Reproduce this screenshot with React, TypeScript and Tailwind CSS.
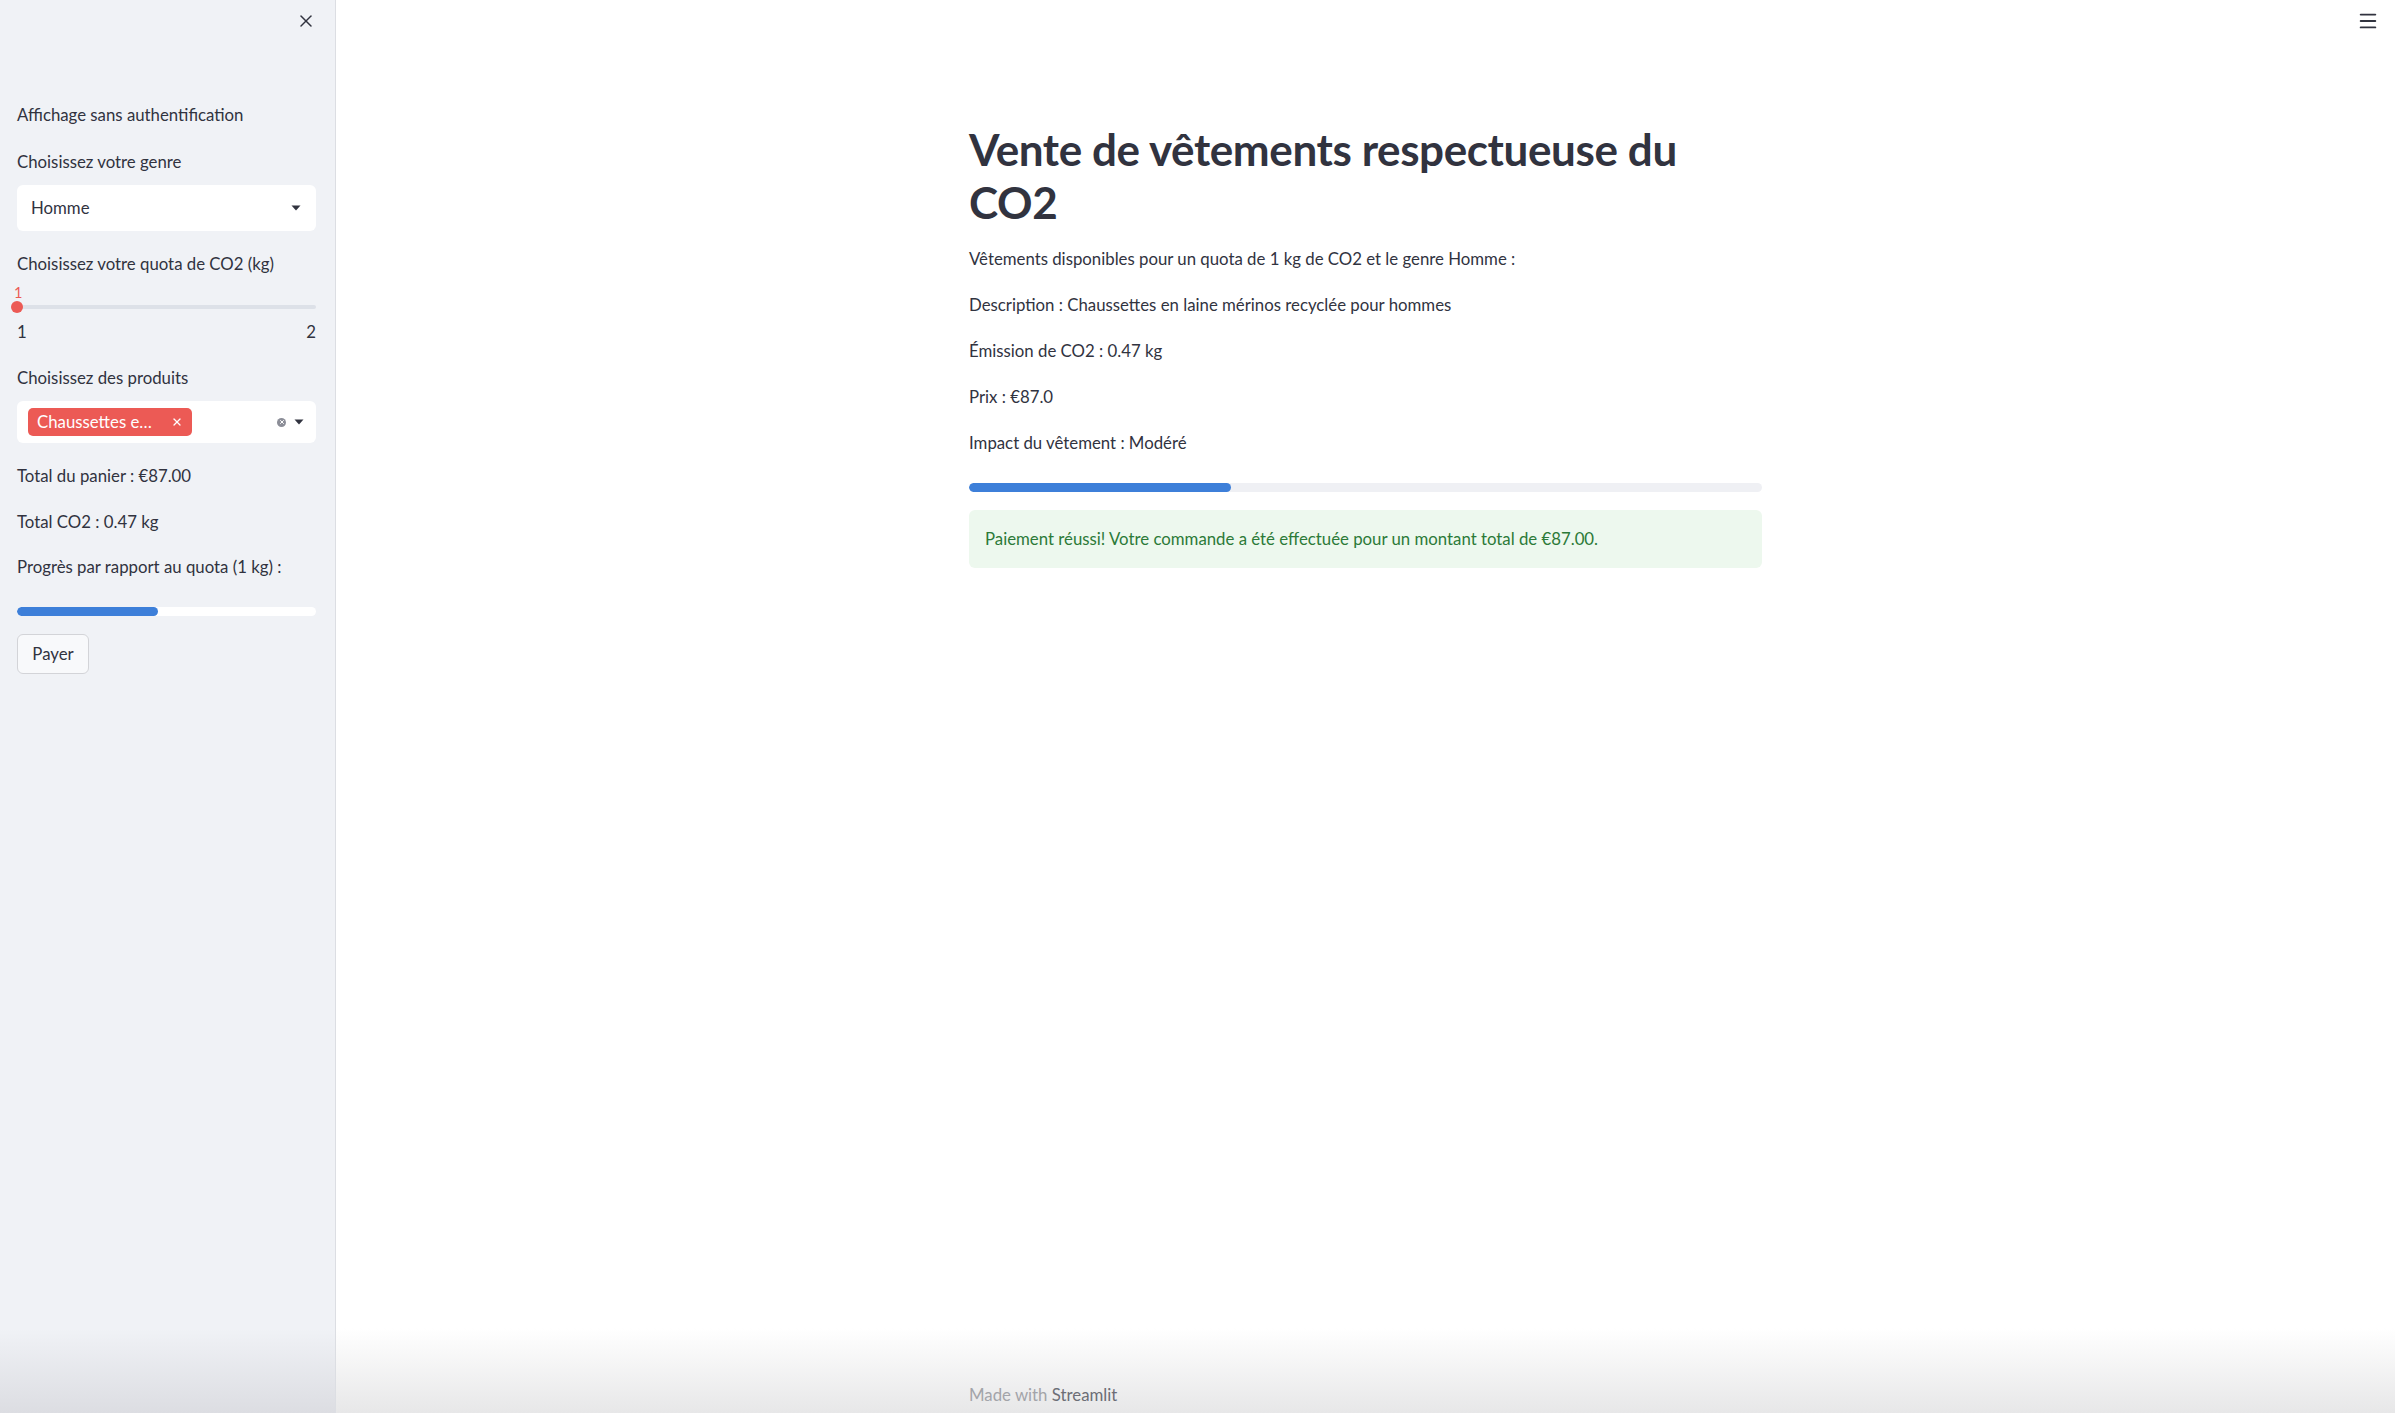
import { useState } from "react";
import { X, Menu } from "lucide-react";

const font = { fontFamily: "Lato, 'Noto Sans', sans-serif" };

const details = [
  "Vêtements disponibles pour un quota de 1 kg de CO2 et le genre Homme :",
  "Description : Chaussettes en laine mérinos recyclée pour hommes",
  "Émission de CO2 : 0.47 kg",
  "Prix : €87.0",
  "Impact du vêtement : Modéré",
];

function Caret() {
  return (
    <svg width="10" height="6" viewBox="0 0 10 6" className="fill-[#31333f]">
      <path d="M0.5 0.5h9L5 5.5z" />
    </svg>
  );
}

function Sidebar() {
  const [genre] = useState("Homme");

  return (
    <aside className="w-[336px] shrink-0 h-full flex flex-col pl-[17px] pr-[19px] pt-[10px] border-r border-[#dcdee3] bg-[linear-gradient(to_bottom,#f0f2f6_94%,#dcdde2)] text-[16.8px] text-[#31333f]">
      <div className="h-[22px] flex items-center justify-end">
        <X size={20} strokeWidth={1.8} className="text-[#31333f]" />
      </div>

      <p className="mt-[71px] leading-6">Affichage sans authentification</p>

      <p className="mt-[23px] leading-6">Choisissez votre genre</p>
      <div className="mt-[11px] h-[46px] rounded-md bg-white flex items-center justify-between pl-[14px] pr-[15px]">
        <span>{genre}</span>
        <Caret />
      </div>

      <p className="mt-[21px] leading-6">Choisissez votre quota de CO2 (kg)</p>
      <div className="mt-[9px] flex flex-col">
        <span className="h-[16px] leading-4 text-[14.5px] text-[#ec5a55] -ml-[3px]">1</span>
        <div className="relative h-[12px] flex items-center">
          <div className="w-full h-[4px] rounded-full bg-[#dde1e8]" />
          <div className="absolute left-[-6px] top-0 w-[12px] h-[12px] rounded-full bg-[#ec5a55]" />
        </div>
        <div className="mt-[9px] h-[20px] flex justify-between items-center">
          <span>1</span>
          <span>2</span>
        </div>
      </div>

      <p className="mt-[24px] leading-6">Choisissez des produits</p>
      <div className="mt-[11px] h-[42px] rounded-md bg-white flex items-center pl-[11px] pr-[12px]">
        <span className="h-[28px] w-[164px] rounded-[5px] bg-[#ec5a55] text-white flex items-center justify-between pl-[9px] pr-[9px]">
          <span>Chaussettes e…</span>
          <X size={12} strokeWidth={2.5} />
        </span>
        <span className="ml-auto flex items-center gap-[8px]">
          <span className="w-[9px] h-[9px] rounded-full bg-[#8c8e98] flex items-center justify-center">
            <X size={6} strokeWidth={4} className="text-white" />
          </span>
          <Caret />
        </span>
      </div>

      <p className="mt-[21px] leading-6">Total du panier : €87.00</p>
      <p className="mt-[22px] leading-6">Total CO2 : 0.47 kg</p>
      <p className="mt-[21px] leading-6">Progrès par rapport au quota (1 kg) :</p>

      <div className="mt-[28px] h-[9px] rounded-full bg-white overflow-hidden">
        <div className="h-full w-[47%] rounded-full bg-[#3d7fd9]" />
      </div>

      <button className="mt-[18px] self-start h-[40px] w-[72px] rounded-[6px] border border-[#d3d4d8] bg-[#f8f9fb] text-[#31333f]">
        Payer
      </button>
    </aside>
  );
}

function Main() {
  return (
    <main className="flex-1 h-full flex flex-col bg-[linear-gradient(to_bottom,#ffffff_94%,#e7e7e8)] text-[#31333f]">
      <header className="h-[40px] flex justify-end items-start pt-[10px] pr-[16px]">
        <Menu size={22} strokeWidth={2} className="text-[#31333f]" />
      </header>

      <div className="mx-auto w-[793px] flex flex-col">
        <h1 className="mt-[83px] text-[44px] leading-[53px] font-bold tracking-[-0.4px]">
          Vente de vêtements respectueuse du CO2
        </h1>

        <div className="mt-[18px] flex flex-col gap-[22px] text-[16.8px] leading-6">
          {details.map((d) => (
            <p key={d}>{d}</p>
          ))}
        </div>

        <div className="mt-[28px] h-[9px] rounded-full bg-[#eff0f4] overflow-hidden">
          <div className="h-full w-[33%] rounded-full bg-[#3d7fd9]" />
        </div>

        <div className="mt-[18px] h-[58px] rounded-md bg-[#edf8ee] flex items-center px-[16px] text-[16.8px] text-[#2c7a38]">
          Paiement réussi! Votre commande a été effectuée pour un montant total de €87.00.
        </div>
      </div>

      <footer className="mt-auto mx-auto w-[793px] h-[31px] text-[16.8px] text-[#a3a4a9]">
        Made with <span className="text-[#6c6e76]">Streamlit</span>
      </footer>
    </main>
  );
}

export default function App() {
  return (
    <div className="w-full h-[1413px] flex overflow-hidden" style={font}>
      <Sidebar />
      <Main />
    </div>
  );
}
